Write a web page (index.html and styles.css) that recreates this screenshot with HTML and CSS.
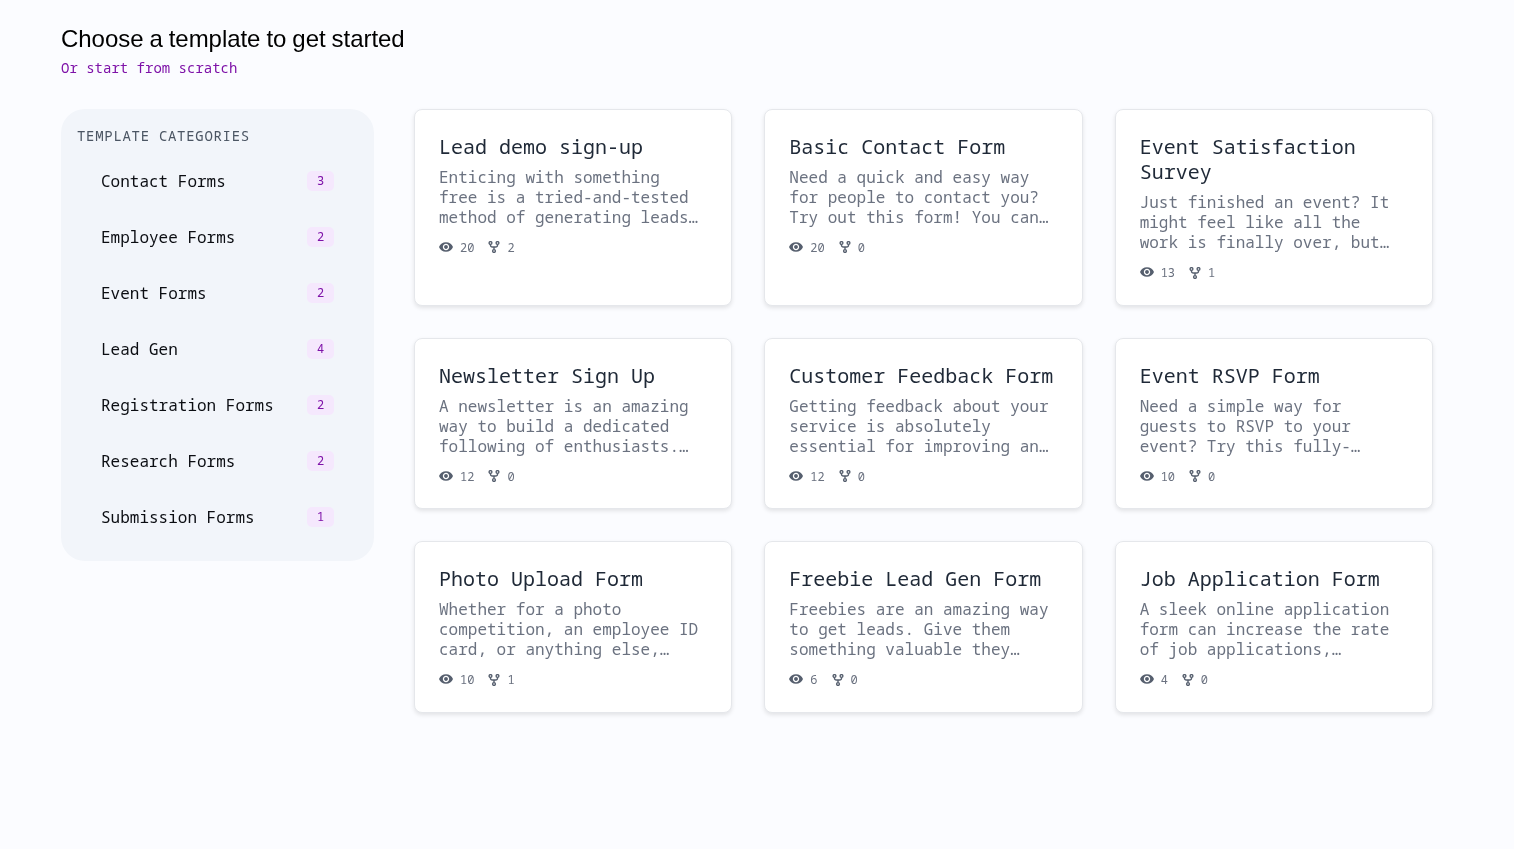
FILE: index.html
```html
<!DOCTYPE html>
<html lang="en">
<head>
  <meta charset="UTF-8">
  <title>Choose a template</title>
  <link rel="stylesheet" href="styles.css">
</head>
<body>
  <svg class="sprites" width="0" height="0" aria-hidden="true">
    <symbol id="eye" viewBox="1 3 22 18">
      <path d="M12 4.5C7 4.5 2.73 7.61 1 12c1.73 4.39 6 7.5 11 7.5s9.27-3.11 11-7.5c-1.73-4.39-6-7.5-11-7.5zM12 17c-2.76 0-5-2.24-5-5s2.24-5 5-5 5 2.24 5 5-2.24 5-5 5zm0-8c-1.66 0-3 1.34-3 3s1.34 3 3 3 3-1.34 3-3-1.34-3-3-3z"/>
    </symbol>
    <symbol id="fork" viewBox="0 0 24 24">
      <g fill="none" stroke="currentColor" stroke-width="2.8">
        <circle cx="5" cy="4" r="2.8"/>
        <circle cx="19" cy="4" r="2.8"/>
        <circle cx="12" cy="20" r="2.8"/>
        <path d="M5 7v1.5a3.5 3.5 0 0 0 3.5 3.5h7a3.5 3.5 0 0 0 3.5-3.5V7M12 12v5"/>
      </g>
    </symbol>
  </svg>

  <header class="top">
    <h1>Choose a template to get started</h1>
    <a class="scratch" href="#">Or start from scratch</a>
  </header>

  <main class="layout">
    <aside class="sidebar">
      <h2>Template Categories</h2>
      <ul>
        <li><span>Contact Forms</span><span class="count">3</span></li>
        <li><span>Employee Forms</span><span class="count">2</span></li>
        <li><span>Event Forms</span><span class="count">2</span></li>
        <li><span>Lead Gen</span><span class="count">4</span></li>
        <li><span>Registration Forms</span><span class="count">2</span></li>
        <li><span>Research Forms</span><span class="count">2</span></li>
        <li><span>Submission Forms</span><span class="count">1</span></li>
      </ul>
    </aside>

    <section class="grid">
      <article class="card">
        <h3>Lead demo sign-up</h3>
        <p>Enticing with something<br>free is a tried-and-tested<br>method of generating leads…</p>
        <div class="stats">
          <span class="stat"><svg class="icon"><use href="#eye"/></svg>20</span>
          <span class="stat"><svg class="icon fork"><use href="#fork"/></svg>2</span>
        </div>
      </article>
      <article class="card">
        <h3>Basic Contact Form</h3>
        <p>Need a quick and easy way<br>for people to contact you?<br>Try out this form! You can…</p>
        <div class="stats">
          <span class="stat"><svg class="icon"><use href="#eye"/></svg>20</span>
          <span class="stat"><svg class="icon fork"><use href="#fork"/></svg>0</span>
        </div>
      </article>
      <article class="card">
        <h3>Event Satisfaction Survey</h3>
        <p>Just finished an event? It<br>might feel like all the<br>work is finally over, but…</p>
        <div class="stats">
          <span class="stat"><svg class="icon"><use href="#eye"/></svg>13</span>
          <span class="stat"><svg class="icon fork"><use href="#fork"/></svg>1</span>
        </div>
      </article>
      <article class="card">
        <h3>Newsletter Sign Up</h3>
        <p>A newsletter is an amazing<br>way to build a dedicated<br>following of enthusiasts.…</p>
        <div class="stats">
          <span class="stat"><svg class="icon"><use href="#eye"/></svg>12</span>
          <span class="stat"><svg class="icon fork"><use href="#fork"/></svg>0</span>
        </div>
      </article>
      <article class="card">
        <h3>Customer Feedback Form</h3>
        <p>Getting feedback about your<br>service is absolutely<br>essential for improving an…</p>
        <div class="stats">
          <span class="stat"><svg class="icon"><use href="#eye"/></svg>12</span>
          <span class="stat"><svg class="icon fork"><use href="#fork"/></svg>0</span>
        </div>
      </article>
      <article class="card">
        <h3>Event RSVP Form</h3>
        <p>Need a simple way for<br>guests to RSVP to your<br>event? Try this fully-…</p>
        <div class="stats">
          <span class="stat"><svg class="icon"><use href="#eye"/></svg>10</span>
          <span class="stat"><svg class="icon fork"><use href="#fork"/></svg>0</span>
        </div>
      </article>
      <article class="card">
        <h3>Photo Upload Form</h3>
        <p>Whether for a photo<br>competition, an employee ID<br>card, or anything else,…</p>
        <div class="stats">
          <span class="stat"><svg class="icon"><use href="#eye"/></svg>10</span>
          <span class="stat"><svg class="icon fork"><use href="#fork"/></svg>1</span>
        </div>
      </article>
      <article class="card">
        <h3>Freebie Lead Gen Form</h3>
        <p>Freebies are an amazing way<br>to get leads. Give them<br>something valuable they…</p>
        <div class="stats">
          <span class="stat"><svg class="icon"><use href="#eye"/></svg>6</span>
          <span class="stat"><svg class="icon fork"><use href="#fork"/></svg>0</span>
        </div>
      </article>
      <article class="card">
        <h3>Job Application Form</h3>
        <p>A sleek online application<br>form can increase the rate<br>of job applications,…</p>
        <div class="stats">
          <span class="stat"><svg class="icon"><use href="#eye"/></svg>4</span>
          <span class="stat"><svg class="icon fork"><use href="#fork"/></svg>0</span>
        </div>
      </article>
    </section>
  </main>
</body>
</html>
```

FILE: styles.css
```css
* {
  box-sizing: border-box;
}

body {
  margin: 0;
  min-height: 849px;
  padding: 24px 81px 0 61px;
  background: #fbfcff;
  font-family: "Noto Sans Mono", "Liberation Mono", monospace;
  color: #111827;
}

.sprites {
  position: absolute;
}

.top,
.layout {
  will-change: transform;
}

.top h1 {
  margin: 0;
  font-family: "Liberation Sans", Arial, sans-serif;
  font-size: 24px;
  font-weight: 400;
  line-height: 30px;
  letter-spacing: -0.05px;
  word-spacing: -0.6px;
  color: #000;
}

.scratch {
  display: block;
  margin-top: 4px;
  font-size: 14px;
  line-height: 20px;
  color: #7e12a8;
  text-decoration: none;
}

.layout {
  display: flex;
  gap: 40px;
  align-items: flex-start;
  margin-top: 31px;
}

.sidebar {
  flex: 0 0 313px;
  height: 452px;
  padding: 17px 16px;
  background: #f2f5fa;
  border-radius: 24px;
}

.sidebar h2 {
  margin: 0;
  font-size: 14px;
  font-weight: 400;
  line-height: 20px;
  letter-spacing: 0.7px;
  text-transform: uppercase;
  color: #4b5563;
}

.sidebar ul {
  margin: 7px 0 0;
  padding: 0;
  list-style: none;
}

.sidebar li {
  display: flex;
  align-items: center;
  justify-content: space-between;
  height: 56px;
  padding: 0 24px;
  font-size: 16px;
  color: #0b0d12;
}

.count {
  width: 27px;
  height: 20px;
  border-radius: 5px;
  background: #f5e8fd;
  font-size: 12px;
  line-height: 20px;
  text-align: center;
  color: #7e12a8;
}

.grid {
  flex: 1;
  display: grid;
  grid-template-columns: repeat(3, 1fr);
  gap: 32px;
}

.card {
  padding: 24px;
  background: #fff;
  border: 1px solid #e5e7eb;
  border-radius: 8px;
  box-shadow: 0 2px 4px rgba(0, 0, 0, 0.1);
}

.card h3 {
  margin: 0;
  font-size: 20px;
  font-weight: 400;
  line-height: 25.4px;
  color: #1f2937;
}

.card p {
  margin: 7.3px 0 0;
  font-size: 16px;
  line-height: 20px;
  color: #6b7280;
}

.stats {
  display: flex;
  gap: 14px;
  margin-top: 12.7px;
  height: 16px;
  align-items: center;
}

.stat {
  display: flex;
  align-items: center;
  gap: 7px;
  font-size: 12px;
  color: #6b7280;
}

.icon {
  width: 14px;
  height: 14px;
  margin-top: -1px;
  fill: #565f6e;
  color: #565f6e;
}

.icon.fork {
  width: 12px;
  height: 12px;
  margin-top: 0;
}
```
